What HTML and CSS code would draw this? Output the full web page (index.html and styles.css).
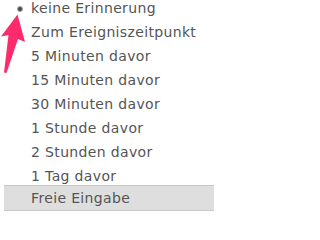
FILE: index.html
```html
<!DOCTYPE html>
<html lang="de">
<head>
<meta charset="utf-8">
<link rel="stylesheet" href="styles.css">
</head>
<body>
<ul class="menu">
  <li class="item selected">keine Erinnerung</li>
  <li class="item">Zum Ereigniszeitpunkt</li>
  <li class="item">5 Minuten davor</li>
  <li class="item">15 Minuten davor</li>
  <li class="item">30 Minuten davor</li>
  <li class="item">1 Stunde davor</li>
  <li class="item">2 Stunden davor</li>
  <li class="item">1 Tag davor</li>
  <li class="item hover">Freie Eingabe</li>
</ul>
<svg class="arrow" width="30" height="80" viewBox="0 0 30 80">
  <polygon points="17.5,14.5 25,42 18,39 6.5,73 4,72.5 8.5,35 1,36.5" fill="#fe2a6c"/>
</svg>
</body>
</html>
```
FILE: styles.css
```css
html, body {
  margin: 0;
  padding: 0;
  background: #ffffff;
  overflow: hidden;
}
body {
  position: relative;
  width: 214px;
  height: 214px;
  font-family: "DejaVu Sans", "Noto Sans", sans-serif;
}
.menu {
  list-style: none;
  margin: -4px 0 0 4px;
  padding: 0;
}
.item {
  position: relative;
  height: 24px;
  line-height: 24px;
  padding-left: 27px;
  font-size: 14px;
  letter-spacing: 0.35px;
  color: #555555;
  white-space: nowrap;
}
.selected::before {
  content: "";
  position: absolute;
  left: 13px;
  top: 10px;
  width: 4px;
  height: 4px;
  border-radius: 50%;
  background: #4a4a4a;
  border: 1px solid #a0a0a0;
}
.hover {
  margin-top: -3px;
  background: #dedede;
  border-top: 1px solid #c9c9c9;
  border-bottom: 1px solid #c9c9c9;
}
.arrow {
  position: absolute;
  left: 0;
  top: 0;
}
```
